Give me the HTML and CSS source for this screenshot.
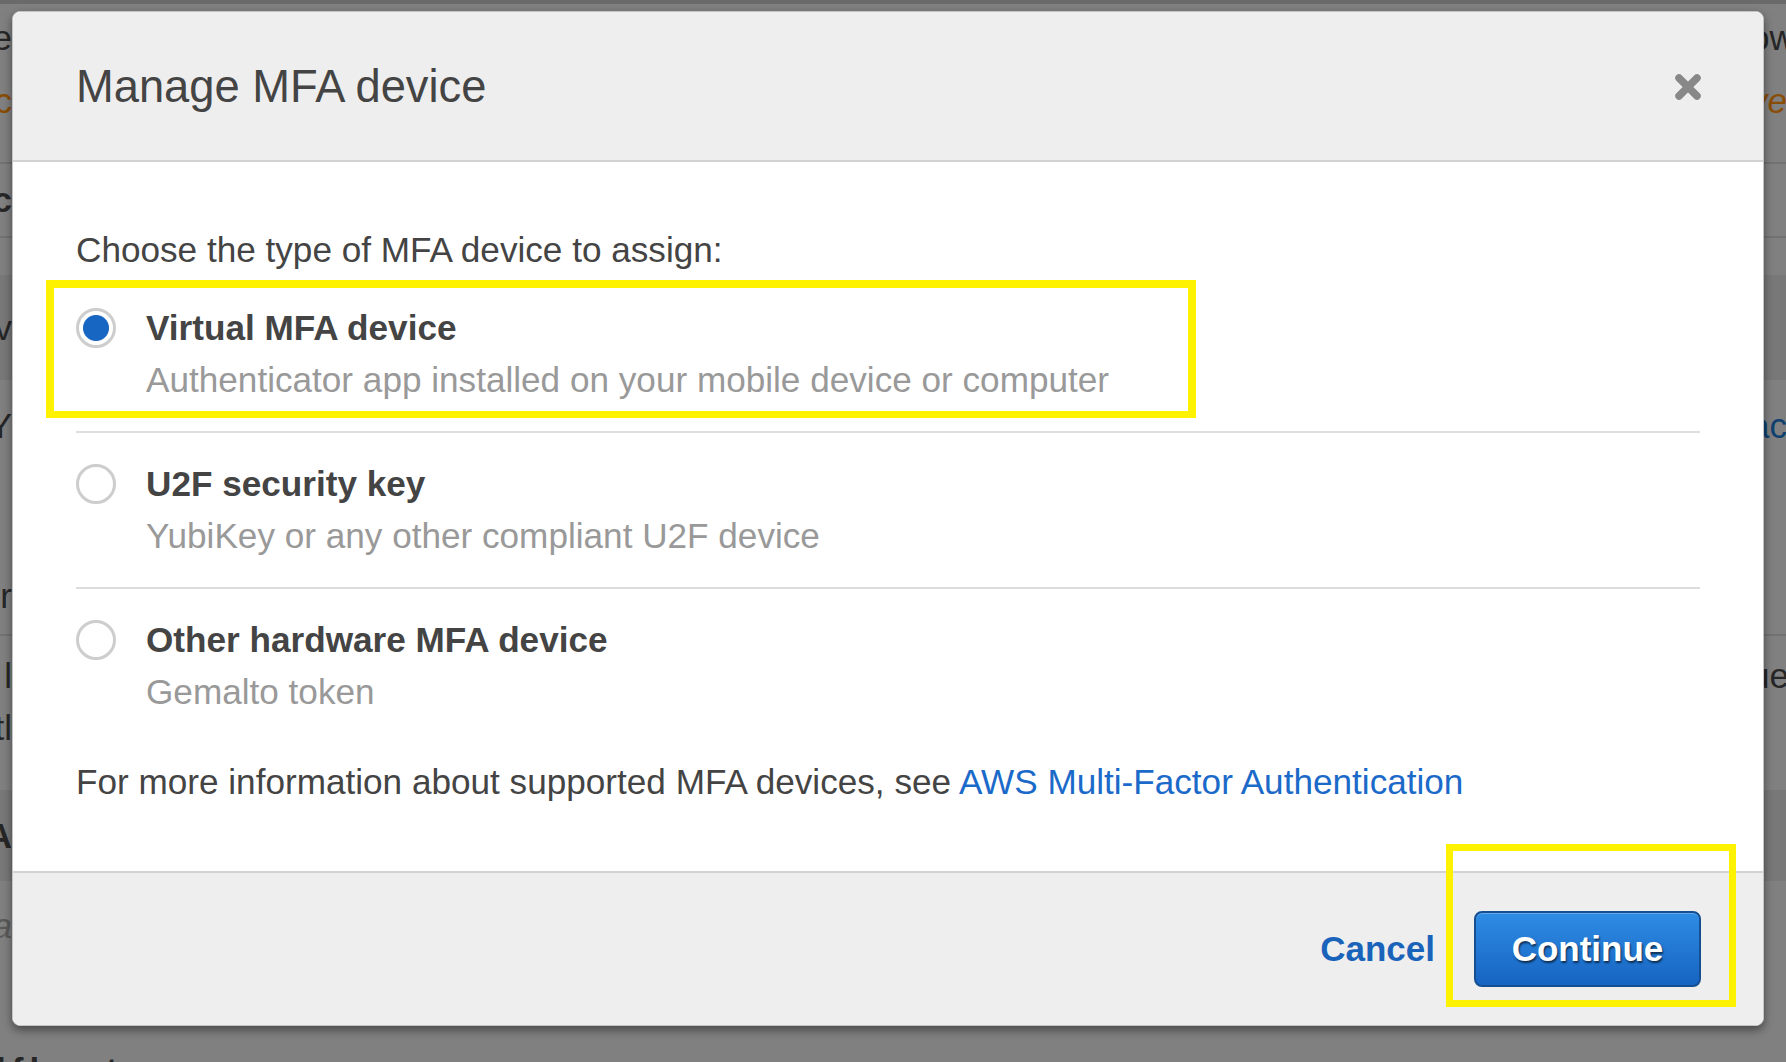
FILE: index.html
```html
<!DOCTYPE html>
<html>
<head>
<meta charset="utf-8">
<title>Manage MFA device</title>
<link rel="stylesheet" href="styles.css">
</head>
<body>
<div class="page">
	<div class="bg-row top-band"></div>
	<div class="bg-row r1"><span class="bg-left">e</span><span class="bg-right">ow</span></div>
	<div class="bg-row r2"><span class="bg-left orange">c</span><span class="bg-right orange italic">ve</span></div>
	<div class="bg-row r3 ruled"></div>
	<div class="bg-row r4 ruled"><span class="bg-left bold">c</span></div>
	<div class="bg-row r5"></div>
	<div class="bg-row r6 band"><span class="bg-left">v</span></div>
	<div class="bg-row r7"><span class="bg-left">Y</span><span class="bg-right blue">ac</span></div>
	<div class="bg-row r8 ruled end"><span class="bg-left">r</span></div>
	<div class="bg-row r9 stack">
		<div class="bg-line"><span class="bg-left">l</span><span class="bg-right">ue</span></div>
		<div class="bg-line"><span class="bg-left">tl</span></div>
	</div>
	<div class="bg-row r10 band"><span class="bg-left bold tuck">FA</span></div>
	<div class="bg-row r11"><span class="bg-left italic light">a</span></div>
	<div class="bg-row r12"><span class="bg-bottom bold">lflowt</span></div>
</div>

<div class="modal">
	<div class="modal-header">
		<h2 class="modal-title">Manage MFA device</h2>
		<button type="button" class="close-btn" aria-label="Close">
			<svg width="28" height="28" viewBox="0 0 28 28"><path d="M5 5 L23 23 M23 5 L5 23" stroke="#888" stroke-width="7.5" stroke-linecap="round" fill="none"/></svg>
		</button>
	</div>

	<div class="modal-body">
		<p class="intro">Choose the type of MFA device to assign:</p>
		<ul class="device-list">
			<li class="device-item">
				<input type="radio" class="radio" name="mfa" checked>
				<div class="device-text">
					<div class="device-name">Virtual MFA device</div>
					<div class="device-desc">Authenticator app installed on your mobile device or computer</div>
				</div>
			</li>
			<li class="device-item">
				<input type="radio" class="radio" name="mfa">
				<div class="device-text">
					<div class="device-name">U2F security key</div>
					<div class="device-desc">YubiKey or any other compliant U2F device</div>
				</div>
			</li>
			<li class="device-item">
				<input type="radio" class="radio" name="mfa">
				<div class="device-text">
					<div class="device-name">Other hardware MFA device</div>
					<div class="device-desc">Gemalto token</div>
				</div>
			</li>
		</ul>
		<p class="more-info">For more information about supported MFA devices, see <a href="#">AWS Multi-Factor Authentication</a></p>
	</div>

	<div class="modal-footer">
		<a href="#" class="cancel-link">Cancel</a>
		<button type="button" class="continue-btn">Continue</button>
	</div>

	<div class="highlight highlight-option"></div>
	<div class="highlight highlight-continue"></div>
</div>
</body>
</html>
```

FILE: styles.css
```css
*{
	box-sizing: border-box;
}
html, body{
	margin: 0;
	padding: 0;
}
body{
	width: 1786px;
	height: 1062px;
	overflow: hidden;
	position: relative;
	font-family: "Liberation Sans", Arial, sans-serif;
	background: #808080;
}

/* dimmed page behind the dialog */
.page{
	display: flex;
	flex-direction: column;
	height: 1062px;
	font-size: 35px;
	color: #262626;
}
.bg-row{
	display: flex;
	align-items: center;
	justify-content: space-between;
	flex: none;
}
.bg-row.stack{
	flex-direction: column;
	align-items: stretch;
	justify-content: flex-start;
}
.bg-line{
	display: flex;
	justify-content: space-between;
	height: 52px;
	align-items: center;
}
.bg-left{
	width: 12px;
	display: flex;
	justify-content: flex-end;
	white-space: nowrap;
}
.bg-left.tuck{
	width: 26px;
	margin-left: -14px;
}
.bg-right{
	width: 36px;
	white-space: nowrap;
}
.bg-bottom{
	margin-left: -4px;
	line-height: 1;
	align-self: flex-end;
	margin-bottom: -26px;
	letter-spacing: 6px;
}
.orange{ color: #8a4d05; }
.blue{ color: #10406f; }
.bold{ font-weight: bold; }
.italic{ font-style: italic; }
.light{ color: #5a5a5a; }
.ruled{ border-bottom: 2px solid #727272; }
.band{ background: #787878; }
.end{ align-items: flex-end; padding-bottom: 18px; }

.top-band{ height: 4px; background: #6a6a6a; }
.r1{ height: 68px; }
.r2{ height: 58px; }
.r3{ height: 34px; }
.r4{ height: 74px; }
.r5{ height: 37px; }
.r6{ height: 105px; }
.r7{ height: 92px; }
.r8{ height: 164px; }
.r9{ height: 154px; padding-top: 14px; }
.r10{ height: 91px; }
.r11{ height: 90px; }
.r12{ height: 91px; }

/* dialog */
.modal{
	position: absolute;
	left: 12px;
	top: 11px;
	width: 1752px;
	background: #fff;
	border: 1px solid #c4c4c4;
	border-radius: 8px;
	box-shadow: 0 4px 10px rgba(0, 0, 0, 0.45);
	color: #444;
}
.modal-header{
	display: flex;
	align-items: center;
	justify-content: space-between;
	height: 150px;
	padding: 2px 61px 0 63px;
	background: #eee;
	border-bottom: 2px solid #d2d2d2;
	border-radius: 8px 8px 0 0;
}
.modal-title{
	margin: 0;
	font-size: 45.3px;
	font-weight: normal;
	line-height: 48px;
	color: #444;
}
.close-btn{
	border: 0;
	padding: 0;
	background: none;
	display: flex;
	cursor: pointer;
}
.modal-body{
	padding: 63px 63px 64px;
	font-size: 35.15px;
	line-height: 50px;
}
.intro{
	margin: 0 0 2px;
}
.device-list{
	list-style: none;
	margin: 0;
	padding: 0;
}
.device-item{
	display: flex;
	align-items: flex-start;
	gap: 30px;
	padding: 26px 0 26px;
	border-bottom: 2px solid #ddd;
}
.device-item:last-child{
	border-bottom: 0;
}
.radio{
	appearance: none;
	-webkit-appearance: none;
	flex: none;
	width: 40px;
	height: 40px;
	margin: 5px 0 0;
	border: 3px solid #cdcdcd;
	border-radius: 50%;
	background: #fff;
}
.radio:checked{
	background: radial-gradient(circle, #1766c2 0, #1766c2 12.5px, #fff 13.5px);
}
.device-name{
	font-weight: bold;
	color: #444;
}
.device-desc{
	margin-top: 2px;
	color: #999;
}
.more-info{
	margin: 14px 0 0;
}
.more-info a{
	color: #1b6ac9;
	text-decoration: none;
}
.modal-footer{
	display: flex;
	align-items: center;
	justify-content: flex-end;
	gap: 39px;
	height: 154px;
	padding: 0 62px;
	background: #eee;
	border-top: 2px solid #d2d2d2;
	border-radius: 0 0 8px 8px;
}
.cancel-link{
	font-size: 35px;
	font-weight: bold;
	color: #1a63ba;
	text-decoration: none;
}
.continue-btn{
	width: 227px;
	height: 76px;
	padding: 0;
	font-family: inherit;
	font-size: 35px;
	font-weight: bold;
	color: #fff;
	text-shadow: 1px 2px 2px rgba(0, 0, 0, 0.6);
	background: linear-gradient(#2e8ce4, #1664c2);
	border: 2px solid #154f91;
	border-radius: 8px;
	box-shadow: inset 0 1px 0 rgba(255, 255, 255, 0.25);
	cursor: pointer;
}

/* yellow annotation boxes drawn over the screenshot */
.highlight{
	position: absolute;
	border: 7px solid #fff200;
	pointer-events: none;
}
.highlight-option{
	left: 33px;
	top: 268px;
	width: 1150px;
	height: 138px;
	border-width: 8px 8px 7px;
}
.highlight-continue{
	left: 1433px;
	top: 832px;
	width: 290px;
	height: 163px;
}
```
